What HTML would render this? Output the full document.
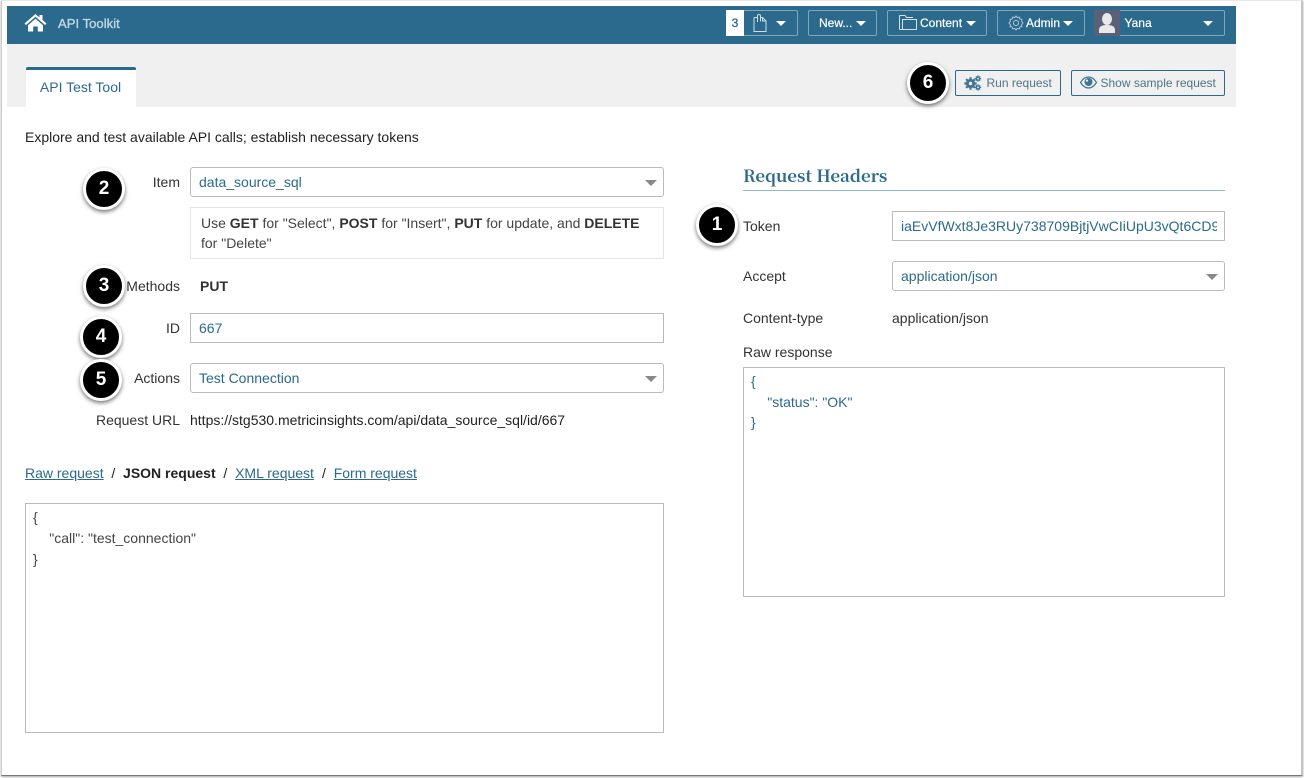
<!DOCTYPE html>
<html>
<head>
<meta charset="utf-8">
<style>
html,body{margin:0;padding:0;background:#fff;}
body{width:1304px;height:778px;overflow:hidden;position:relative;font-family:"Liberation Sans",sans-serif;font-size:14px;color:#222;}
.a{position:absolute;white-space:nowrap;}
.t{position:absolute;white-space:nowrap;line-height:20px;}
.lab{position:absolute;white-space:nowrap;line-height:20px;text-align:right;color:#333;}
.box{position:absolute;box-sizing:border-box;background:#fff;border:1px solid #bbb;border-radius:3px;color:#2b6a8c;line-height:28px;padding-left:8px;white-space:nowrap;overflow:hidden;}
.box.sq{border-radius:0;}
.arr{position:absolute;width:0;height:0;border-left:6px solid transparent;border-right:6px solid transparent;border-top:6px solid #888;}
.warr{display:inline-block;width:0;height:0;border-left:5.5px solid transparent;border-right:5.5px solid transparent;border-top:5.5px solid #fff;}
.nb{position:absolute;box-sizing:border-box;height:26px;top:10px;border:1px solid #7fa6bc;border-radius:2px;color:#fff;font-size:12px;line-height:24px;white-space:nowrap;-webkit-text-stroke:.2px #fff;}
.btn{position:absolute;box-sizing:border-box;top:70px;height:26px;border:1px solid #2b6a8c;border-radius:2px;color:#4d7488;font-size:12px;line-height:24px;white-space:nowrap;}
.c{position:absolute;box-sizing:border-box;width:42px;height:42px;border-radius:50%;background:#000;border:3px solid #fff;box-shadow:0 2px 4px rgba(0,0,0,.55);color:#fff;font-weight:bold;font-size:19px;line-height:35px;text-align:center;}
a{color:#2b6a8c;text-decoration:underline;}
b{color:#333;}
</style>
</head>
<body>
<!-- screenshot frame -->
<div class="a" style="left:1px;top:0;width:1302px;height:776px;box-sizing:border-box;border-left:1px solid #ccc;border-right:2px solid #c4c4c4;border-top:1px solid #e8e8e8;border-bottom:1px solid #777;box-shadow:0 1px 2px rgba(0,0,0,.35);"></div>

<!-- header -->
<div class="a" style="left:7px;top:6px;width:1229px;height:38px;background:#2b6a8c;"></div>
<div class="a" style="left:7px;top:44px;width:1229px;height:63px;background:#f0f0f0;"></div>

<svg class="a" style="left:24px;top:13px;" width="23" height="19" viewBox="0 0 23 19"><path d="M0.5 10.5 L11.5 1 L15.5 4.4 V2 H18.5 V7 L22.5 10.5 L21 12 L11.5 3.8 L2 12 Z" fill="#fff"/><path d="M4 12.2 L11.5 5.8 L19 12.2 V18.5 H13.8 V13.5 H9.2 V18.5 H4 Z" fill="#fff"/></svg>
<div class="t" style="left:58px;top:14px;color:#c3d8e3;font-size:13px;letter-spacing:.06px;-webkit-text-stroke:.35px #c3d8e3;">API Toolkit</div>

<!-- nav -->
<div class="nb" style="left:726px;width:72px;">
  <div class="a" style="left:-1px;top:-1px;width:18px;height:26px;line-height:26px;background:#fff;color:#2b6a8c;text-align:center;-webkit-text-stroke:.3px #2b6a8c;">3</div>
  <svg class="a" style="left:26px;top:3px;" width="14" height="18" viewBox="0 0 14 18"><path d="M1 3.5 H4 M8 3.5 H9.5 L13 7 V17.5 H1 V3.5 M9.5 3.5 V7 H13" fill="none" stroke="#cfdee6" stroke-width="1"/><path d="M4.5 8 V2 a1.5 1.5 0 0 1 3 0 V7.5" fill="none" stroke="#cfdee6" stroke-width="1"/></svg>
  <span class="warr a" style="left:49px;top:10px;"></span>
</div>
<div class="nb" style="left:808px;width:69px;padding-left:10px;">New...<span class="warr a" style="left:47px;top:10px;"></span></div>
<div class="nb" style="left:887px;width:100px;">
  <svg class="a" style="left:11px;top:4px;" width="18" height="15" viewBox="0 0 18 15"><path d="M3.5 14.5 H1 a.5 .5 0 0 1 -.5 -.5 V1 a.5 .5 0 0 1 .5 -.5 H6 L7.5 2.5 H14" fill="none" stroke="#d5e2e9" stroke-width="1"/><path d="M3.5 4.5 H17.5 V14.5 H3.5 Z" fill="none" stroke="#d5e2e9" stroke-width="1"/></svg>
  <span class="a" style="left:32px;top:0;">Content</span><span class="warr a" style="left:78px;top:10px;"></span>
</div>
<div class="nb" style="left:997px;width:88px;">
  <svg class="a" style="left:10px;top:4px;" width="16" height="16" viewBox="0 0 16 16"><path d="M8 1 L9.2 2.6 L11.2 2 L11.8 4 L13.9 4.4 L13.6 6.4 L15 8 L13.6 9.6 L13.9 11.6 L11.8 12 L11.2 14 L9.2 13.4 L8 15 L6.8 13.4 L4.8 14 L4.2 12 L2.1 11.6 L2.4 9.6 L1 8 L2.4 6.4 L2.1 4.4 L4.2 4 L4.8 2 L6.8 2.6 Z" fill="none" stroke="#b7ced9" stroke-width=".9"/><circle cx="8" cy="8" r="2.6" fill="none" stroke="#b7ced9" stroke-width=".9"/></svg>
  <span class="a" style="left:28px;top:0;">Admin</span><span class="warr a" style="left:65px;top:10px;"></span>
</div>
<div class="nb" style="left:1094px;width:131px;">
  <div class="a" style="left:-1px;top:-1px;width:26px;height:26px;background:#5a6078;overflow:hidden;">
    <svg width="26" height="26" viewBox="0 0 26 26"><ellipse cx="13" cy="9" rx="5" ry="6" fill="#e9e9e9"/><path d="M5 23 V20 C5 16 9 15 13 15 C17 15 21 16 21 20 V23 Z" fill="#e9e9e9"/></svg>
  </div>
  <span class="a" style="left:29.5px;top:0;">Yana</span><span class="warr a" style="left:108px;top:10px;"></span>
</div>

<!-- tab -->
<div class="a" style="left:26px;top:67px;width:110px;height:40px;box-sizing:border-box;background:#fff;border-top:3px solid #2b6a8c;border-radius:2px 2px 0 0;color:#2b6a8c;text-align:center;line-height:35px;padding-right:1px;">API Test Tool</div>

<!-- buttons -->
<div class="btn" style="left:955px;width:106px;padding-left:30.5px;">
  <svg class="a" style="left:8px;top:4px;" width="18" height="16" viewBox="0 0 18 16"><g fill="#3f7595"><circle cx="6.5" cy="8.5" r="4.6"/><g stroke="#3f7595" stroke-width="2.2"><path d="M6.5 2.3 V14.7 M0.3 8.5 H12.7 M2.1 4.1 L10.9 12.9 M10.9 4.1 L2.1 12.9"/></g><circle cx="14" cy="3.6" r="2.2"/><g stroke="#3f7595" stroke-width="1.2"><path d="M14 .4 V6.8 M10.8 3.6 H17.2 M11.8 1.4 L16.2 5.8 M16.2 1.4 L11.8 5.8"/></g><circle cx="14" cy="12.4" r="2.2"/><g stroke="#3f7595" stroke-width="1.2"><path d="M14 9.2 V15.6 M10.8 12.4 H17.2 M11.8 10.2 L16.2 14.6 M16.2 10.2 L11.8 14.6"/></g></g><circle cx="6.5" cy="8.5" r="1.7" fill="#f0f0f0"/><circle cx="14" cy="3.6" r=".9" fill="#f0f0f0"/><circle cx="14" cy="12.4" r=".9" fill="#f0f0f0"/></svg>
  Run request
</div>
<div class="btn" style="left:1071px;width:154px;padding-left:28.5px;">
  <svg class="a" style="left:8px;top:5px;" width="17" height="13" viewBox="0 0 17 13"><path d="M.5 6.5 C3 2.5 5.6 1 8.5 1 C11.4 1 14 2.5 16.5 6.5 C14 10.5 11.4 12 8.5 12 C5.6 12 3 10.5 .5 6.5 Z" fill="none" stroke="#3f7595" stroke-width="1.2"/><circle cx="8.5" cy="6" r="4" fill="#3f7595"/><circle cx="7" cy="4.6" r="1.1" fill="#f0f0f0"/></svg>
  Show sample request
</div>

<!-- content -->
<div class="t" style="left:25px;top:127px;">Explore and test available API calls; establish necessary tokens</div>

<!-- left form -->
<div class="lab" style="left:100px;width:80px;top:172px;">Item</div>
<div class="box" style="left:190px;top:167px;width:474px;height:30px;">data_source_sql</div>
<div class="arr" style="left:645px;top:180px;"></div>

<div class="a" style="left:190px;top:207px;width:474px;height:52px;box-sizing:border-box;border:1px solid #e6e6e6;padding:5px 10px;line-height:20px;color:#444;white-space:normal;">Use <b>GET</b> for "Select", <b>POST</b> for "Insert", <b>PUT</b> for update, and <b>DELETE</b> for "Delete"</div>

<div class="lab" style="left:100px;width:80px;top:276px;">Methods</div>
<div class="t" style="left:200px;top:276px;font-weight:bold;color:#333;">PUT</div>

<div class="lab" style="left:100px;width:80px;top:318px;">ID</div>
<div class="box sq" style="left:190px;top:313px;width:474px;height:30px;">667</div>

<div class="lab" style="left:100px;width:80px;top:368px;">Actions</div>
<div class="box" style="left:190px;top:363px;width:474px;height:30px;">Test Connection</div>
<div class="arr" style="left:645px;top:376px;"></div>

<div class="lab" style="left:60px;width:120px;top:410px;">Request URL</div>
<div class="t" style="left:190px;top:410px;">https://stg530.metricinsights.com/api/data_source_sql/id/667</div>

<div class="t" style="left:25px;top:463px;"><a>Raw request</a>&nbsp; /&nbsp; <b style="color:#222">JSON request</b>&nbsp; /&nbsp; <a>XML request</a><span style="margin-left:.3px">&nbsp; /&nbsp; </span><a>Form request</a></div>

<div class="a" style="left:25px;top:503px;width:639px;height:230px;box-sizing:border-box;border:1px solid #bbb;padding:3px 7px;line-height:21px;color:#444;white-space:pre;font-family:'Liberation Sans',sans-serif;">{
<span style="margin-left:.7px">    "call": "test_connection"</span>
}</div>

<!-- right -->
<div class="a" style="left:743px;top:163px;width:482px;height:28px;box-sizing:border-box;border-bottom:1px solid #8fb8cb;color:#2b6a8c;font-family:'Noto Serif CJK SC','Liberation Serif',serif;font-size:16.9px;line-height:24px;font-weight:700;">Request Headers</div>

<div class="t" style="left:743px;top:216px;color:#333;">Token</div>
<div class="box sq" style="left:892px;top:211px;width:333px;height:30px;padding:0;"><div style="margin-left:8px;width:316px;overflow:hidden;">iaEvVfWxt8Je3RUy738709BjtjVwCIiUpU3vQt6CD9</div></div>

<div class="t" style="left:743px;top:266px;color:#333;">Accept</div>
<div class="box" style="left:892px;top:261px;width:333px;height:30px;">application/json</div>
<div class="arr" style="left:1206px;top:274px;"></div>

<div class="t" style="left:743px;top:308px;color:#333;">Content-type</div>
<div class="t" style="left:892px;top:308px;color:#333;">application/json</div>

<div class="t" style="left:743px;top:342px;color:#333;">Raw response</div>
<div class="a" style="left:743px;top:367px;width:482px;height:230px;box-sizing:border-box;border:1px solid #bbb;padding:3px 7px;line-height:20.5px;color:#2b6a8c;white-space:pre;">{
<span style="margin-left:.7px">    "status": "OK"</span>
}</div>

<!-- callouts -->
<div class="c" style="left:83px;top:168px;">2</div>
<div class="c" style="left:83px;top:265px;">3</div>
<div class="c" style="left:80px;top:316px;">4</div>
<div class="c" style="left:80px;top:359px;">5</div>
<div class="c" style="left:696px;top:204px;">1</div>
<div class="c" style="left:907px;top:62px;">6</div>
</body>
</html>
